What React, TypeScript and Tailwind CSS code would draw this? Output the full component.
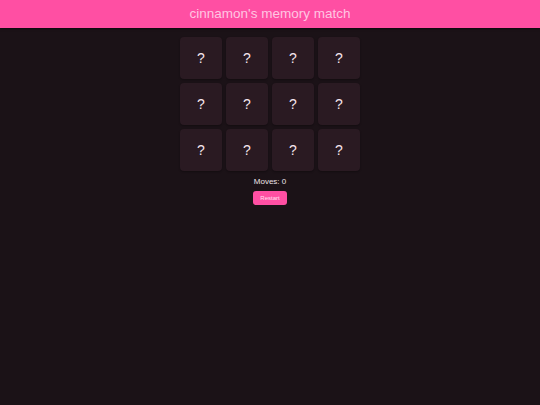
export default function App() {
  const cards = Array.from({ length: 12 }, (_, i) => i)

  return (
    <div className="min-h-screen w-full bg-[#1b1217] font-['Liberation_Sans',Arial,sans-serif]">
      {/* Header */}
      <header className="h-[28px] bg-[#ff4fa3] shadow-[0_1px_2px_rgba(0,0,0,0.5)] flex items-center justify-center">
        <h1 className="text-[13.5px] text-[#ffc6e2] leading-none">cinnamon's memory match</h1>
      </header>

      <main className="flex flex-col items-center pt-[9px]">
        <div className="grid grid-cols-[repeat(4,42px)] gap-[4px]">
          {cards.map((i) => (
            <div
              key={i}
              className="h-[42px] w-[42px] rounded-[4px] bg-[#2a1a22] shadow-[0_1px_2px_rgba(0,0,0,0.3)] flex items-center justify-center text-[14px] text-[#f5e6ee]"
            >
              ?
            </div>
          ))}
        </div>

        <div className="mt-[6px] text-[8px] leading-[10px] text-[#eee4e9]">Moves: 0</div>

        <button className="mt-[4px] h-[14px] w-[34px] rounded-[3px] bg-[#ff4fa3] text-[6px] text-[#ffe0ef]">
          Restart
        </button>
      </main>
    </div>
  )
}
